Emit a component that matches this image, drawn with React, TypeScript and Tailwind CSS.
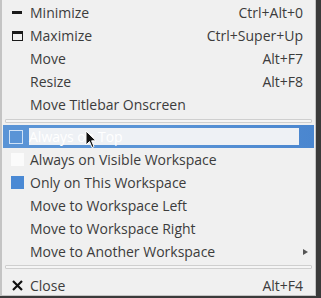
import React from "react";

type Item = {
  label: string;
  shortcut?: string;
  icon?: "min" | "max" | "check" | "ghost" | "filled" | "close";
  submenu?: boolean;
};

const groupA: Item[] = [
  { label: "Minimize", shortcut: "Ctrl+Alt+0", icon: "min" },
  { label: "Maximize", shortcut: "Ctrl+Super+Up", icon: "max" },
  { label: "Move", shortcut: "Alt+F7" },
  { label: "Resize", shortcut: "Alt+F8" },
  { label: "Move Titlebar Onscreen" },
];

const groupB: Item[] = [
  { label: "Always on Visible Workspace", icon: "ghost" },
  { label: "Only on This Workspace", icon: "filled" },
  { label: "Move to Workspace Left" },
  { label: "Move to Workspace Right" },
  { label: "Move to Another Workspace", submenu: true },
];

function Icon({ kind }: { kind?: Item["icon"] }) {
  if (kind === "min") return <span className="block h-[3px] w-[10px] bg-[#1a1a1a]" />;
  if (kind === "max")
    return <span className="block h-[10px] w-[11px] border border-t-[3px] border-[#1a1a1a]" />;
  if (kind === "ghost") return <span className="block h-[13px] w-[13px] bg-white/70" />;
  if (kind === "filled") return <span className="block h-[13px] w-[13px] bg-[#4a89d4]" />;
  if (kind === "close")
    return (
      <svg width="11" height="11" viewBox="0 0 11 11">
        <path d="M1 1L10 10M10 1L1 10" stroke="#111" strokeWidth="2.2" />
      </svg>
    );
  return null;
}

function Row({ item }: { item: Item }) {
  return (
    <div className="flex h-[23px] shrink-0 items-center pr-[12px] text-[#3c3c3c]">
      <span className="flex w-[28px] shrink-0 items-center justify-center pl-[3px] pr-[1px]">
        <Icon kind={item.icon} />
      </span>
      <span className="flex-1">{item.label}</span>
      {item.shortcut && <span>{item.shortcut}</span>}
      {item.submenu && (
        <svg width="5" height="6" viewBox="0 0 5 6" className="mr-[-5px]">
          <path d="M0 0L5 3L0 6Z" fill="#555" />
        </svg>
      )}
    </div>
  );
}

export default function App() {
  return (
    <div className="flex h-[298px] w-[321px] bg-[#3a3a3a]">
      <div
        className="flex h-[296px] w-[316px] flex-col overflow-hidden border-l-2 border-r border-b border-[#c4c4c4] bg-[#f0f0f0] pt-[1px] text-[14px]"
        style={{ fontFamily: '"Open Sans", "DejaVu Sans", sans-serif' }}
      >
        {groupA.map((i) => (
          <Row key={i.label} item={i} />
        ))}
        <div className="mx-[3px] mt-[3px] mb-[2px] h-[4px] shrink-0 rounded-[1px] border border-[#cfcfcf] bg-[#f5f5f5]" />
        <div className="relative mx-[1px] flex h-[23px] shrink-0 items-center bg-gradient-to-r from-[#5a94d6] via-[#5a94d6] to-[#4a86cf]">
          <span className="flex w-[26px] shrink-0 items-center justify-center">
            <span className="block h-[14px] w-[14px] border border-[#cfe2f7]" />
          </span>
          <div className="flex h-[17px] w-[270px] items-center bg-[#eef1f5] text-white">Always on Top</div>
          <svg className="absolute left-[82px] top-[5px]" width="12" height="19" viewBox="0 0 12 19">
            <path d="M1 1L1 15L4.5 11.5L7 17.5L9 16.6L6.6 10.8L11 10.8Z" fill="#111" stroke="#fff" strokeWidth="1" />
          </svg>
        </div>
        {groupB.map((i) => (
          <Row key={i.label} item={i} />
        ))}
        <div className="mx-[3px] my-[2px] h-[4px] shrink-0 rounded-[1px] border border-[#cfcfcf] bg-[#f5f5f5]" />
        <div className="shrink-0 pt-[3px]">
          <Row item={{ label: "Close", shortcut: "Alt+F4", icon: "close" }} />
        </div>
      </div>
    </div>
  );
}
